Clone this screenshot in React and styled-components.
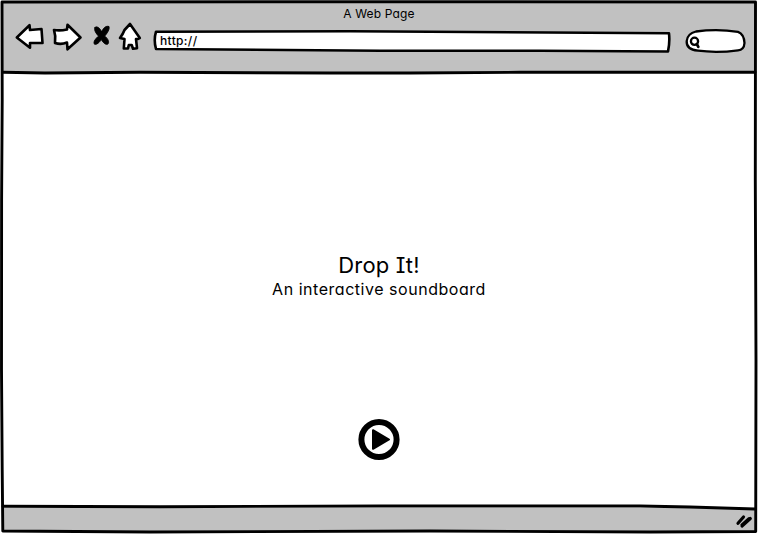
import React from "react";
import styled, { createGlobalStyle } from "styled-components";

const Global = createGlobalStyle`
  *, *::before, *::after { box-sizing: border-box; }
  body { margin: 0; background: #fff; overflow: hidden; }
`;

const Window = styled.div`
  position: relative;
  display: grid;
  grid-template-rows: 72px 1fr 26px;
  width: 758px;
  height: 534px;
  background: #fff;
  color: #000;
  font-family: Inter, "Open Sans", sans-serif;
  font-feature-settings: "cv11", "ss03", "cv08";
`;

const Header = styled.header`
  display: flex;
  flex-direction: column;
  align-items: stretch;
  margin: 1px 2px 0;
  background: #c1c1c1;
`;

const Title = styled.h1`
  margin: 0;
  padding-top: 5px;
  height: 21px;
  font-size: 12px;
  line-height: 16px;
  font-weight: 400;
  letter-spacing: 0.15px;
  text-align: center;
`;

const Toolbar = styled.nav`
  display: flex;
  align-items: flex-start;
  padding-left: 12px;
`;

const IconButton = styled.button`
  width: ${(p) => p.$width}px;
  height: 32px;
  margin: 0 ${(p) => p.$gap}px 0 0;
  padding: 0;
  border: 0;
  background: none;
`;

const Drawing = styled.svg`
  display: block;
  overflow: visible;
  fill: ${(p) => p.$fill || "#fff"};
  stroke: #000;
  stroke-width: ${(p) => p.$weight || 2.6};
  stroke-linejoin: round;
  stroke-linecap: round;
`;

const Field = styled.div`
  position: relative;
  width: ${(p) => p.$width}px;
  height: 25px;
  margin: 7px ${(p) => p.$gap || 0}px 0 0;
`;

const Address = styled.span`
  position: absolute;
  left: 7px;
  top: 4px;
  font-size: 12px;
  line-height: 16px;
  font-weight: 450;
  letter-spacing: 0.35px;
`;

const Content = styled.main`
  display: flex;
  flex-direction: column;
  align-items: center;
  padding-top: 178px;
`;

const Heading = styled.h2`
  margin: 0;
  font-size: 22px;
  line-height: 30px;
  font-weight: 400;
  letter-spacing: 0.15px;
`;

const Subtitle = styled.p`
  margin: 0 0 121px;
  font-size: 16px;
  line-height: 18px;
  font-weight: 400;
  letter-spacing: 0.53px;
`;

const PlayButton = styled.button`
  width: 42px;
  height: 42px;
  padding: 0;
  border: 0;
  background: none;
`;

const StatusBar = styled.footer`
  display: flex;
  justify-content: flex-end;
  margin: 0 2px 2px;
  padding: 6px 3px 0 0;
  background: #c1c1c1;
`;

const FrameLines = styled(Drawing)`
  position: absolute;
  inset: 0;
  pointer-events: none;
`;

export default function App() {
  return (
    <>
      <Global />
      <Window>
        <Header>
          <Title>A Web Page</Title>
          <Toolbar>
            <IconButton $width={30} $gap={8} aria-label="Back">
              <Drawing width="30" height="32" viewBox="14 22 30 32">
                <path d="M16.8 37.5L29.5 25.2L30 30L41.5 29L42.5 43L30 43L30 47.8Z" />
              </Drawing>
            </IconButton>
            <IconButton $width={30} $gap={10} aria-label="Forward">
              <Drawing width="30" height="32" viewBox="52 22 30 32">
                <path d="M54 30Q60 31 67 29.5L67.5 24.8L80.5 37.5L67.5 49.3L67 42.5Q61 45 55 43Q56 36 54 30Z" />
              </Drawing>
            </IconButton>
            <IconButton $width={19} $gap={7} aria-label="Stop">
              <Drawing width="19" height="32" viewBox="92 22 19 32" $fill="#000" $weight={1}>
                <path d="M95 27.5C97 25.5 100.3 28.5 101.7 32C103 28.5 105.5 25.5 109 26.5C109.8 29.5 107 33.5 104.7 36C107.5 38.5 109.3 41 108.3 43.5C106.5 46 102.8 42.5 101.3 39.5C99.5 42.5 96.5 45 94.5 44.2C92.7 41.5 96.5 38 98.5 36C96 33.5 93.7 30 95 27.5Z" />
              </Drawing>
            </IconButton>
            <IconButton $width={25} $gap={10} aria-label="Home">
              <Drawing width="25" height="32" viewBox="118 22 25 32">
                <path d="M130 24L139.8 38Q138 39.5 136 39L137 48.2L133 48.7L131.7 45L128.8 45L128 48.5L123.8 48.5L124.5 39L120 38Q123 34 124.5 30Z" />
              </Drawing>
            </IconButton>
            <Field $width={519} $gap={13}>
              <Drawing width="519" height="25" viewBox="153 29 519 25">
                <path d="M156 31.7L350 31.3Q520 33 669 33.3Q670 42 668 51.5L540 50.7L380 50.7L156 49Q153.5 40 156 31.7Z" />
              </Drawing>
              <Address>http://</Address>
            </Field>
            <Field $width={62}>
              <Drawing width="62" height="25" viewBox="685 29 62 25" $weight={2.3}>
                <path d="M696 31.5Q717 28.5 738 31.8Q744 34 744.5 43Q744 50 738 50.3Q717 53.2 698 50.7Q686 49.5 686.7 41Q687.5 33.5 696 31.5Z" />
                <circle cx="694.5" cy="41.3" r="3.6" />
                <path d="M697 44.3L698.3 46.8" strokeWidth="2.8" />
              </Drawing>
            </Field>
          </Toolbar>
        </Header>
        <Content>
          <Heading>Drop It!</Heading>
          <Subtitle>An interactive soundboard</Subtitle>
          <PlayButton aria-label="Play">
            <Drawing width="42" height="42" viewBox="0 0 42 42" $weight={6}>
              <circle cx="21" cy="20.5" r="17.6" />
              <path d="M15 11.2L31 20.5L15 29.8Z" fill="#000" strokeWidth="2" />
            </Drawing>
          </PlayButton>
        </Content>
        <StatusBar>
          <Drawing width="18" height="18" viewBox="735 514 18 18" $weight={3.2}>
            <path d="M738 523.2L743.5 517M742 526L750.3 518.5M742 525L749 518.7" fill="none" />
          </Drawing>
        </StatusBar>
        <FrameLines width="758" height="534" viewBox="0 0 758 534" $fill="none" $weight={2.9}>
          <path d="M2 2L350 1.7L755.5 2L755.3 180L756 360L755.7 531.5L650 532L430 531L150 532L2.8 531L2.2 470L1.5 370L1.6 200L2.2 100L2 2Z" />
          <path d="M3 72.2L45 73L140 72.2L330 73L410 73L520 72.3L755 72.3" />
          <path d="M3 506.3L160 506.7L380 506L640 506L690 507L755 509" />
        </FrameLines>
      </Window>
    </>
  );
}
